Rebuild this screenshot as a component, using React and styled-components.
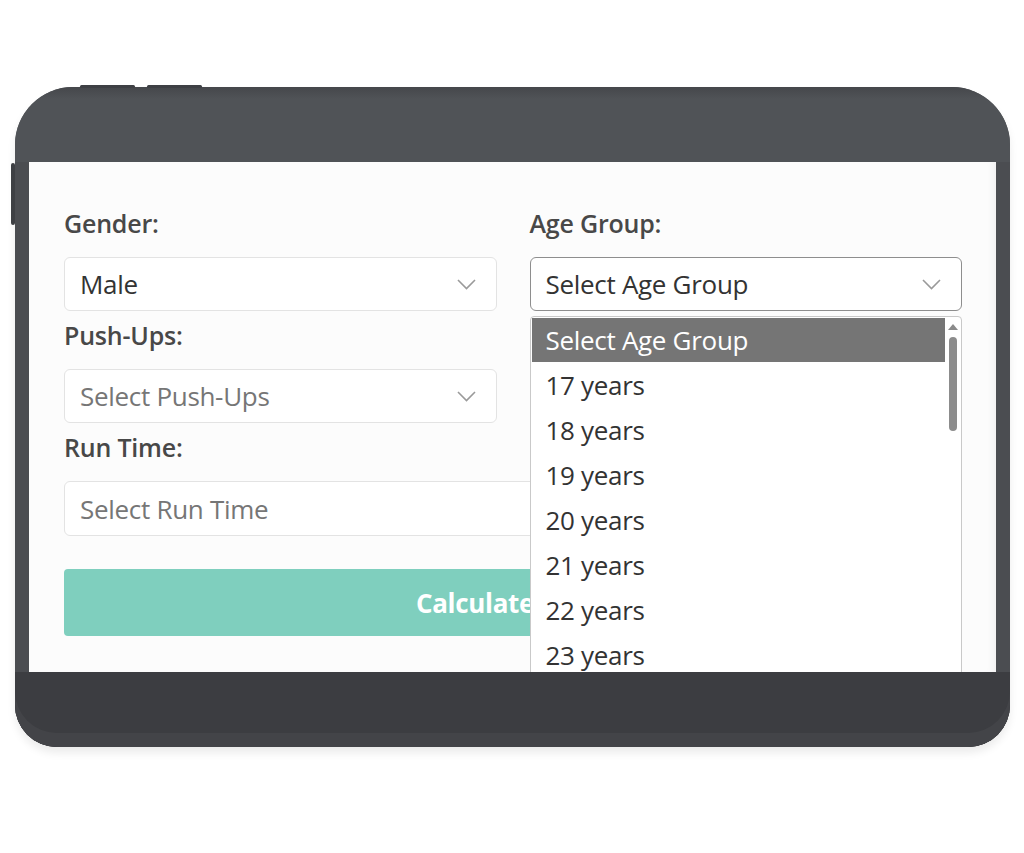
import React from "react";
import styled, { createGlobalStyle } from "styled-components";

const Global = createGlobalStyle`
  html, body { margin: 0; padding: 0; background: #ffffff; }
  body { font-family: "Open Sans", "Noto Sans", sans-serif; }
  * { box-sizing: border-box; }
`;

const Stage = styled.div`
  width: 1024px;
  height: 853px;
  padding: 87px 0 0 15px;
`;

const Device = styled.div`
  position: relative;
  width: 995px;
  height: 660px;
  display: flex;
  flex-direction: column;
  padding: 0 14px;
  background: #4b4d51;
  border-radius: 58px 58px 42px 42px;
  box-shadow: 0 6px 8px rgba(0, 0, 0, 0.08);
`;

const TopBezel = styled.div`
  height: 75px;
  flex: none;
  margin: 0 -14px;
  border-radius: 58px 58px 0 0;
  background: linear-gradient(#45474b 0px, #505357 12px, #505357 100%);
`;

const BottomBezel = styled.div`
  height: 75px;
  flex: none;
  margin: 0 -14px;
  border-radius: 0 0 42px 42px;
  background: #3c3d41;
  box-shadow: inset 0 -14px 0 #434448, inset 0 -12px 0 #3c3d41;
`;

const SideKey = styled.div`
  position: absolute;
  background: #3e4044;
  border-radius: 2px;
  ${(p) => (p.$vertical ? `left: -4px; top: ${p.$at}px; width: 4px; height: 62px;` : `top: -2px; left: ${p.$at}px; width: 55px; height: 3px;`)}
`;

const Screen = styled.div`
  flex: 1;
  overflow: hidden;
  background: #fcfcfc;
  padding: 46px 34px 0 35px;
  box-shadow: inset -8px 0 8px -6px rgba(0, 0, 0, 0.06);
`;

const Form = styled.div`
  display: grid;
  grid-template-columns: 1fr 1fr;
  column-gap: 33px;
  row-gap: 9px;
`;

const Field = styled.div`
  position: relative;
  display: flex;
  flex-direction: column;
  grid-column: ${(p) => (p.$wide ? "1 / -1" : "auto")};
`;

const Label = styled.label`
  font-size: 25px;
  line-height: 30px;
  font-weight: 600;
  color: #484848;
  margin-bottom: 19px;
  letter-spacing: -0.2px;
`;

const SelectBox = styled.div`
  height: ${(p) => (p.$tall ? "55px" : "54px")};
  display: flex;
  align-items: center;
  justify-content: space-between;
  padding: 0 20px 0 15px;
  background: #ffffff;
  border: 1px solid ${(p) => (p.$focused ? "#8e8e8e" : "#e3e3e3")};
  border-radius: 6px;
  font-size: 26px;
  letter-spacing: -0.3px;
  color: ${(p) => (p.$placeholder ? "#767676" : "#333333")};
`;

const Chevron = () => (
  <svg width="19" height="11" viewBox="0 0 19 11" fill="none">
    <polyline points="1,1 9.5,9.5 18,1" stroke="#9a9a9a" strokeWidth="1.6" />
  </svg>
);

const Button = styled.button`
  margin-top: 33px;
  width: 100%;
  height: 67px;
  border: none;
  border-radius: 4px;
  background: #7fcfbe;
  color: #ffffff;
  font-family: "Open Sans", "Noto Sans", sans-serif;
  font-size: 26px;
  font-weight: 700;
  letter-spacing: -0.3px;
`;

const Dropdown = styled.div`
  position: absolute;
  top: calc(100% + 5px);
  left: 0;
  right: 0;
  height: 362px;
  display: flex;
  background: #ffffff;
  border: 1px solid #c9c9c9;
  border-radius: 4px;
  padding: 1px;
  z-index: 2;
`;

const Options = styled.div`
  flex: 1;
  display: flex;
  flex-direction: column;
`;

const Option = styled.div`
  height: ${(p) => (p.$active ? "44px" : "45px")};
  flex: none;
  display: flex;
  align-items: center;
  padding-left: 14px;
  font-size: 26px;
  letter-spacing: -0.3px;
  color: ${(p) => (p.$active ? "#ffffff" : "#333333")};
  background: ${(p) => (p.$active ? "#757575" : "transparent")};
`;

const Scrollbar = styled.div`
  width: 15px;
  flex: none;
  display: flex;
  flex-direction: column;
  align-items: center;
  padding-top: 6px;
  gap: 7px;
`;

const Arrow = styled.div`
  width: 0;
  height: 0;
  border-left: 5px solid transparent;
  border-right: 5px solid transparent;
  border-bottom: 6px solid #8a8a8a;
`;

const Thumb = styled.div`
  width: 8px;
  height: 94px;
  border-radius: 4px;
  background: #8c8c8c;
`;

const ages = ["17", "18", "19", "20", "21", "22", "23"];

export default function App() {
  return (
    <>
      <Global />
      <Stage>
        <Device>
          <SideKey $at={65} />
          <SideKey $at={132} />
          <SideKey $vertical $at={76} />
          <TopBezel />
          <Screen>
            <Form>
              <Field>
                <Label>Gender:</Label>
                <SelectBox>
                  Male
                  <Chevron />
                </SelectBox>
              </Field>
              <Field>
                <Label>Age Group:</Label>
                <SelectBox $focused>
                  Select Age Group
                  <Chevron />
                </SelectBox>
                <Dropdown>
                  <Options>
                    <Option $active>Select Age Group</Option>
                    {ages.map((a) => (
                      <Option key={a}>{a} years</Option>
                    ))}
                  </Options>
                  <Scrollbar>
                    <Arrow />
                    <Thumb />
                  </Scrollbar>
                </Dropdown>
              </Field>
              <Field>
                <Label>Push-Ups:</Label>
                <SelectBox $placeholder>
                  Select Push-Ups
                  <Chevron />
                </SelectBox>
              </Field>
              <Field $wide>
                <Label>Run Time:</Label>
                <SelectBox $placeholder $tall>
                  Select Run Time
                  <Chevron />
                </SelectBox>
              </Field>
            </Form>
            <Button>Calculate Score</Button>
          </Screen>
          <BottomBezel />
        </Device>
      </Stage>
    </>
  );
}
